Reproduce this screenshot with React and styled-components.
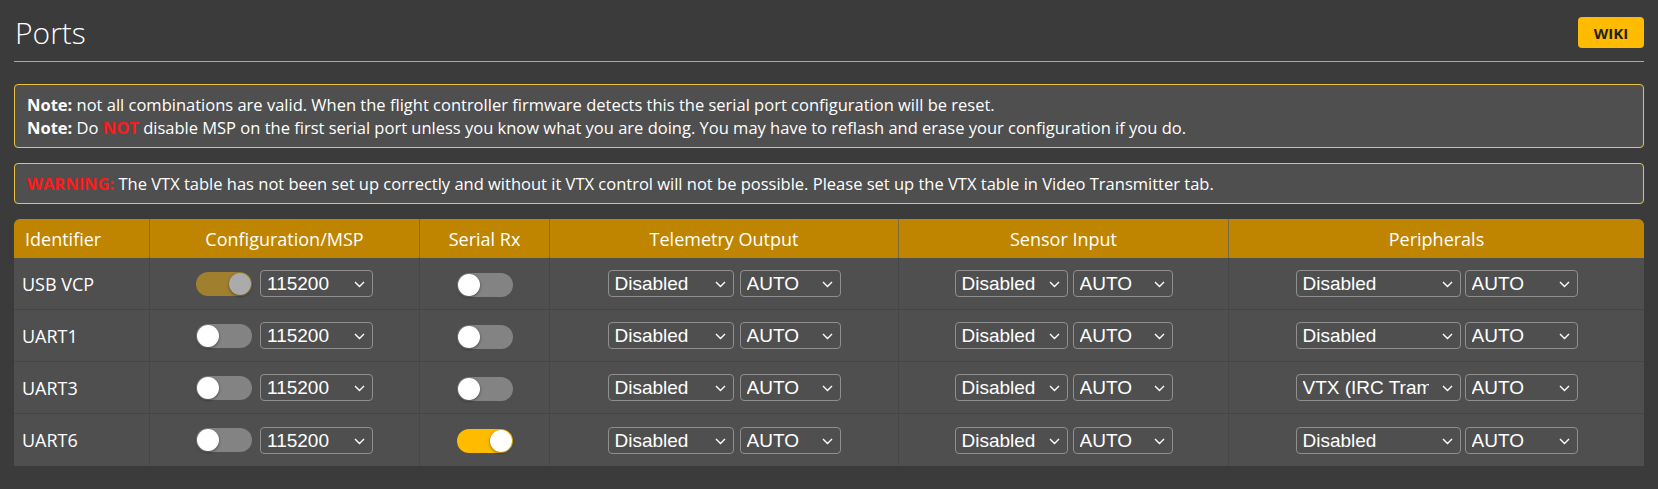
import React from 'react';
import styled, { createGlobalStyle } from 'styled-components';

const GlobalStyle = createGlobalStyle`
  body {
    margin: 0;
    background: #3a3b3a;
    color: #fff;
    font-family: "Open Sans", "Liberation Sans", sans-serif;
  }
`;

const Page = styled.div`
  padding: 0 14px 22px;
`;

const TabHeader = styled.div`
  display: flex;
  align-items: center;
  justify-content: space-between;
  padding: 17px 0 13px;
  border-bottom: 1px solid #d8a82c;
`;

const Title = styled.h1`
  margin: 0;
  padding-left: 1px;
  font-size: 30px;
  line-height: 31px;
  font-weight: 300;
  color: #fff;
`;

const WikiButton = styled.a`
  display: flex;
  align-items: center;
  justify-content: center;
  width: 66px;
  height: 31px;
  border-radius: 4px;
  background: #ffbb00;
  color: #1f1f1f;
  font-size: 15px;
  font-weight: 700;
  text-decoration: none;
`;

const Notes = styled.div`
  display: flex;
  flex-direction: column;
  gap: 15px;
  margin-top: 22px;
`;

const Notice = styled.div`
  background: #4f4f4f;
  border: 1px solid #ecc243;
  border-radius: 4px;
  padding: 8px 12px;
  font-size: 16.5px;
  line-height: 23px;
`;

const Strong = styled.b`
  font-weight: 700;
  color: ${p => p.$red ? '#ff1a1a' : 'inherit'};
`;

const PortsTable = styled.table`
  width: 100%;
  margin-top: 15px;
  border-collapse: separate;
  border-spacing: 0;
  table-layout: fixed;
  background: #4f4f4f;
  border-radius: 6px 6px 0 0;
  overflow: hidden;
  font-size: 18px;
`;

const HeadCell = styled.th`
  height: 39px;
  padding: 0 11px;
  background: #bf8500;
  font-weight: 400;
  text-align: ${p => p.$left ? 'left' : 'center'};
  border-left: 1px solid #7a6a48;
  &:first-child { border-left: none; }
`;

const Cell = styled.td`
  height: 51px;
  padding: 0 8px;
  text-align: ${p => p.$left ? 'left' : 'center'};
  border-left: 1px solid #474747;
  border-bottom: 1px solid #454545;
  &:first-child { border-left: none; }
  tr:last-child & { border-bottom: none; height: 52px; }
`;

const Group = styled.div`
  display: inline-flex;
  align-items: center;
  gap: ${p => p.$gap || 5}px;
  vertical-align: middle;
`;

const Track = styled.span`
  display: inline-flex;
  vertical-align: middle;
  align-items: center;
  justify-content: ${p => p.$on ? 'flex-end' : 'flex-start'};
  box-sizing: border-box;
  width: 56px;
  height: 24px;
  padding: 0 1px;
  border-radius: 12px;
  background: ${p => p.$locked ? '#a0802f' : p.$on ? '#ffbb00' : '#838383'};
`;

const Knob = styled.span`
  width: 22px;
  height: 22px;
  border-radius: 50%;
  background: ${p => p.$locked ? '#ababab' : '#fff'};
  box-shadow: 0 1px 3px rgba(0, 0, 0, 0.45);
`;

const SelectWrap = styled.div`
  position: relative;
  width: ${p => p.$w}px;
  height: 27px;
`;

const NativeSelect = styled.select`
  appearance: none;
  box-sizing: border-box;
  width: 100%;
  height: 100%;
  margin: 0;
  padding: 0 31px 0 6px;
  border: 1px solid #8f8f8f;
  border-radius: 4px;
  background: transparent;
  color: #fff;
  font-family: "Liberation Sans", Arial, sans-serif;
  font-size: 19px;
  outline: none;
`;

const Chevron = styled.svg`
  position: absolute;
  right: 8px;
  top: 11px;
  pointer-events: none;
`;

const Toggle = ({ on, locked }) => (
  <Track $on={on} $locked={locked}>
    <Knob $locked={locked} />
  </Track>
);

const Select = ({ w, value }) => (
  <SelectWrap $w={w}>
    <NativeSelect defaultValue={value}>
      <option>{value}</option>
    </NativeSelect>
    <Chevron width="11" height="7" viewBox="0 0 11 7">
      <polyline points="1,1 5.5,5.5 10,1" fill="none" stroke="#fff" strokeWidth="1.4" />
    </Chevron>
  </SelectWrap>
);

const ports = [
  { id: 'USB VCP', msp: true, rx: false, periph: 'Disabled' },
  { id: 'UART1', msp: false, rx: false, periph: 'Disabled' },
  { id: 'UART3', msp: false, rx: false, periph: 'VTX (IRC Tramp)' },
  { id: 'UART6', msp: false, rx: true, periph: 'Disabled' },
];

export default function App() {
  return (
    <Page>
      <GlobalStyle />
      <TabHeader>
        <Title>Ports</Title>
        <WikiButton href="#">WIKI</WikiButton>
      </TabHeader>

      <Notes>
        <Notice>
          <Strong>Note:</Strong> not all combinations are valid. When the flight controller firmware detects this the serial port configuration will be reset.<br />
          <Strong>Note:</Strong> Do <Strong $red>NOT</Strong> disable MSP on the first serial port unless you know what you are doing. You may have to reflash and erase your configuration if you do.
        </Notice>
        <Notice>
          <Strong $red>WARNING:</Strong> The VTX table has not been set up correctly and without it VTX control will not be possible. Please set up the VTX table in Video Transmitter tab.
        </Notice>
      </Notes>

      <PortsTable>
        <colgroup>
          <col style={{ width: 135 }} />
          <col style={{ width: 270 }} />
          <col style={{ width: 130 }} />
          <col style={{ width: 349 }} />
          <col style={{ width: 330 }} />
          <col />
        </colgroup>
        <thead>
          <tr>
            <HeadCell $left>Identifier</HeadCell>
            <HeadCell>Configuration/MSP</HeadCell>
            <HeadCell>Serial Rx</HeadCell>
            <HeadCell>Telemetry Output</HeadCell>
            <HeadCell>Sensor Input</HeadCell>
            <HeadCell>Peripherals</HeadCell>
          </tr>
        </thead>
        <tbody>
          {ports.map(p => (
            <tr key={p.id}>
              <Cell $left>{p.id}</Cell>
              <Cell>
                <Group $gap={8}>
                  <Toggle on={p.msp} locked={p.msp} />
                  <Select w={113} value="115200" />
                </Group>
              </Cell>
              <Cell>
                <Toggle on={p.rx} />
              </Cell>
              <Cell>
                <Group $gap={6}>
                  <Select w={126} value="Disabled" />
                  <Select w={101} value="AUTO" />
                </Group>
              </Cell>
              <Cell>
                <Group>
                  <Select w={113} value="Disabled" />
                  <Select w={100} value="AUTO" />
                </Group>
              </Cell>
              <Cell>
                <Group $gap={4}>
                  <Select w={165} value={p.periph} />
                  <Select w={113} value="AUTO" />
                </Group>
              </Cell>
            </tr>
          ))}
        </tbody>
      </PortsTable>
    </Page>
  );
}
